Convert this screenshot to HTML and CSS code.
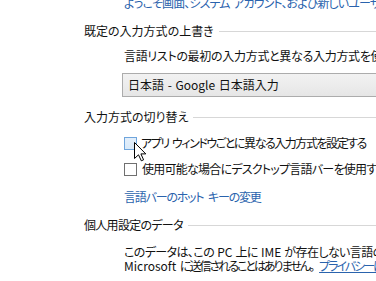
FILE: index.html
```html
<!DOCTYPE html>
<html lang="ja">
<head>
<meta charset="utf-8">
<link rel="stylesheet" href="styles.css">
</head>
<body>
<div class="page">
  <div class="indent"><a class="link top-link">ようこそ画面、システム アカウント、および新しいユーザー アカウントに言語の設定をコピーする</a></div>

  <section class="group g1">
    <div class="group-head"><span class="group-title">既定の入力方式の上書き</span><span class="rule"></span></div>
    <div class="indent">
      <p class="line desc">言語リストの最初の入力方式と異なる入力方式を使用する場合は、ここで選択します</p>
      <div class="select">日本語 - Google 日本語入力</div>
    </div>
  </section>

  <section class="group g2">
    <div class="group-head"><span class="group-title">入力方式の切り替え</span><span class="rule"></span></div>
    <div class="indent">
      <label class="check-row row1"><span class="box hover"></span><span class="check-text t1">アプリ ウィンドウごとに異なる入力方式を設定する</span></label>
      <label class="check-row row2"><span class="box"></span><span class="check-text t2">使用可能な場合にデスクトップ言語バーを使用する</span></label>
      <a class="link line hotkey">言語バーのホット キーの変更</a>
    </div>
  </section>

  <section class="group g3">
    <div class="group-head"><span class="group-title t3">個人用設定のデータ</span><span class="rule"></span></div>
    <div class="indent">
      <p class="para"><span class="p1">このデータは、この <span class="lat">PC</span> 上に <span class="lat">IME</span> が存在しない言語の手書き認識と予測入力の精度を上げるためにのみ使われます。</span><br><span class="lat">Microsoft</span> <span class="p2">に送信されることはありません。</span><a class="link under p2">プライバシーに関する声明</a></p>
    </div>
  </section>

  <svg class="cursor" width="13" height="20" viewBox="0 0 13 20"><path d="M0.5 0.5 L0.5 16.5 L4.5 12.8 L7.3 18.8 L9.6 17.8 L6.9 11.9 L11.8 11.9 Z" fill="#fff" stroke="#000" stroke-width="1" stroke-linejoin="miter"/></svg>
</div>
</body>
</html>
```

FILE: styles.css
```css
html, body {
  margin: 0;
  padding: 0;
  background: #fff;
  overflow: hidden;
}
body {
  width: 376px;
  height: 281px;
}
.page {
  position: relative;
  padding-left: 84px;
  width: 700px;
  font-family: "Noto Sans CJK JP", "Noto Sans", sans-serif;
  font-size: 12px;
  color: #111;
  white-space: nowrap;
  font-feature-settings: "palt";
}
.indent {
  padding-left: 40px;
}
.link {
  color: #2a63ad;
  text-decoration: none;
}
.top-link {
  display: block;
  height: 16px;
  line-height: 16px;
  margin-top: -5px;
  letter-spacing: -0.9px;
  word-spacing: 2px;
}
.group-head {
  display: flex;
  align-items: center;
  height: 16px;
  line-height: 16px;
}
.rule {
  flex: 1;
  height: 1px;
  background: #d7d7d7;
  margin-left: 5px;
  margin-top: 1px;
}
.t3 { letter-spacing: -0.7px; }
.g1 .group-head { margin-top: 12px; }
.g2 .group-head { margin-top: 12px; }
.g3 .group-head { margin-top: 12px; }
.line {
  display: block;
  height: 16px;
  line-height: 16px;
  margin: 0;
}
.desc {
  margin-top: 9px;
  letter-spacing: -0.3px;
}
.select {
  margin-top: 9px;
  margin-left: -2px;
  height: 22px;
  line-height: 22px;
  width: 330px;
  padding-left: 5px;
  border: 1px solid #acacac;
  background: linear-gradient(#f2f2f2, #e6e6e6);
  color: #111;
  word-spacing: 1px;
}
.check-row {
  display: flex;
  align-items: center;
  height: 16px;
  line-height: 16px;
}
.row1 { margin-top: 10px; }
.row2 { margin-top: 10px; }
.box {
  width: 11px;
  height: 11px;
  border: 1px solid #707070;
  background: #fff;
  flex: none;
}
.box.hover {
  border-color: #6fa5dc;
  background: linear-gradient(#e3effb, #d9e9f8);
}
.check-text {
  margin-left: 4px;
}
.check-text.t1 {
  letter-spacing: -1.45px;
  word-spacing: 2px;
}
.check-text.t2 {
  margin-left: 5px;
  letter-spacing: -0.75px;
}
.hotkey {
  margin-top: 12px;
  letter-spacing: -1.2px;
  word-spacing: 3px;
}
.para {
  margin: 12px 0 0;
  line-height: 14px;
  word-spacing: 1px;
}
.p1 { letter-spacing: -0.6px; }
.p2 { letter-spacing: -2px; }
.lat { letter-spacing: 0; }
.under { text-decoration: underline; margin-left: 6px; }
.cursor {
  position: absolute;
  left: 134px;
  top: 147px;
}
```
